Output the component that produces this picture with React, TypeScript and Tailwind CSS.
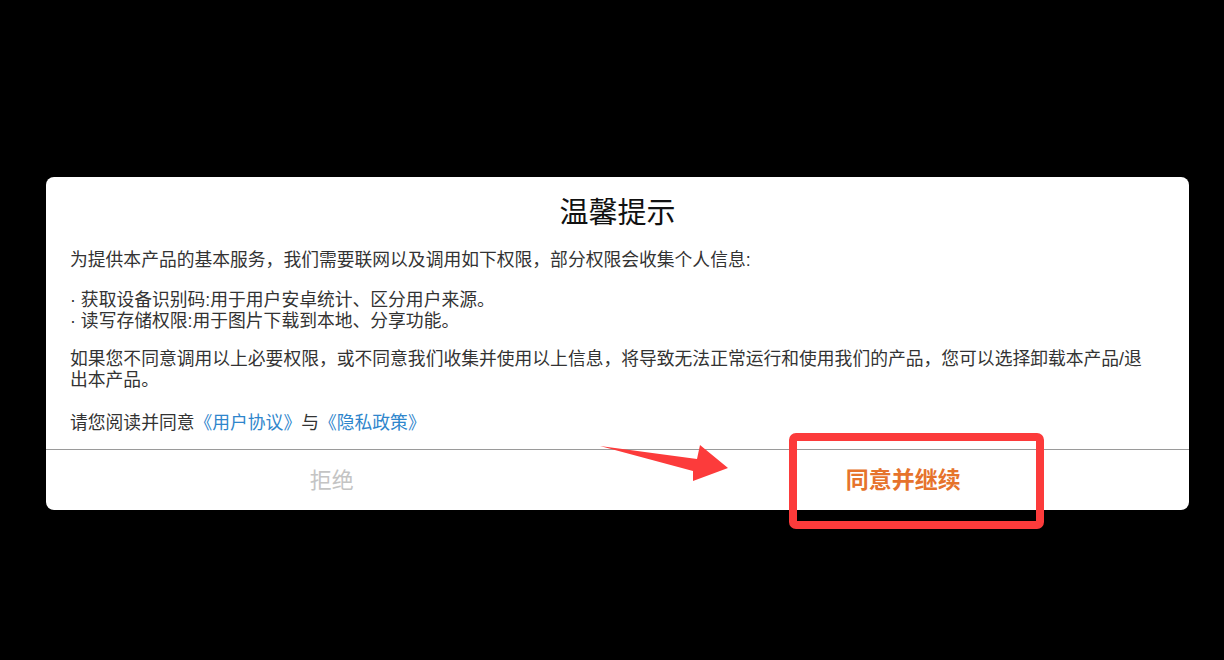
const font = {
  fontFamily: '"Liberation Sans", "Noto Sans CJK SC", sans-serif',
};

function Link({ children }: { children: React.ReactNode }) {
  return <span className="text-[#2f86cc]">{children}</span>;
}

export default function App() {
  return (
    <div className="relative w-[1224px] h-[660px] bg-black overflow-hidden" style={font}>
      <div className="pt-[177px] pl-[46px]">
        {/* Dialog */}
        <div className="w-[1143px] bg-white rounded-[8px] overflow-hidden">
          <h1 className="pt-[18px] text-center text-[29px] leading-[36px] text-[#111]">温馨提示</h1>

          <div className="pl-[24px] pr-[32px] text-[17.8px] leading-[21px] text-[#333]">
            <p className="mt-[19px]">
              为提供本产品的基本服务，我们需要联网以及调用如下权限，部分权限会收集个人信息:
            </p>
            <div className="mt-[19px]">
              <p>· 获取设备识别码:用于用户安卓统计、区分用户来源。</p>
              <p>· 读写存储权限:用于图片下载到本地、分享功能。</p>
            </div>
            <p className="mt-[17px]">
              如果您不同意调用以上必要权限，或不同意我们收集并使用以上信息，将导致无法正常运行和使用我们的产品，您可以选择卸载本产品/退出本产品。
            </p>
            <p className="mt-[22px]">
              请您阅读并同意<Link>《用户协议》</Link>与<Link>《隐私政策》</Link>
            </p>
          </div>

          <div className="mt-[15px] h-px bg-[#9a9a9a]" />

          <div className="grid grid-cols-2 h-[60px]">
            <button className="flex items-center justify-center text-[22px] text-[#c4c4c4]">拒绝</button>
            <button className="flex items-center justify-center text-[23px] font-bold text-[#e6732c]">
              同意并继续
            </button>
          </div>
        </div>
      </div>

      {/* Annotation: highlight box */}
      <div className="absolute left-[789px] top-[433px] w-[255px] h-[96px] border-[8px] border-[#fc3b3b] rounded-[7px]" />

      {/* Annotation: arrow */}
      <svg className="absolute inset-0 pointer-events-none" width="1224" height="660" viewBox="0 0 1224 660">
        <polygon
          points="600,446 697,459 700,445 728,468 693,481 693,471"
          fill="#fc3b3b"
        />
      </svg>
    </div>
  );
}
